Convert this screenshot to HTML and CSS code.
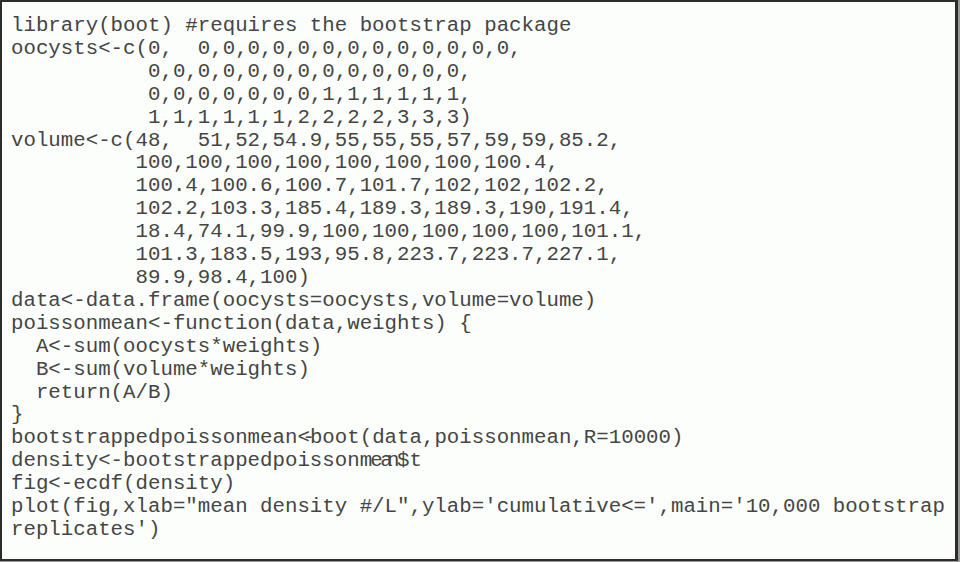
FILE: index.html
```html
<!DOCTYPE html>
<html>
<head>
<meta charset="utf-8">
<link rel="stylesheet" href="styles.css">
</head>
<body>
<div class="box"><pre class="code">library(boot) #requires the bootstrap package
oocysts&lt;-c(0,  0,0,0,0,0,0,0,0,0,0,0,0,0,
           0,0,0,0,0,0,0,0,0,0,0,0,0,
           0,0,0,0,0,0,0,1,1,1,1,1,1,
           1,1,1,1,1,1,2,2,2,2,3,3,3)
volume&lt;-c(48,  51,52,54.9,55,55,55,57,59,59,85.2,
          100,100,100,100,100,100,100,100.4,
          100.4,100.6,100.7,101.7,102,102,102.2,
          102.2,103.3,185.4,189.3,189.3,190,191.4,
          18.4,74.1,99.9,100,100,100,100,100,101.1,
          101.3,183.5,193,95.8,223.7,223.7,227.1,
          89.9,98.4,100)
data&lt;-data.frame(oocysts=oocysts,volume=volume)
poissonmean&lt;-function(data,weights) {
  A&lt;-sum(oocysts*weights)
  B&lt;-sum(volume*weights)
  return(A/B)
}
bootstrappedpoissonmean<span class="ls-60">&lt;</span><span class="ls-40">-</span>boot(data,poissonmean,R=10000)
density&lt;-bootstrappedpoisson<span class="ls-15">m</span><span class="ls-20">e</span><span class="ls-45">a</span><span class="ls-20">n</span>$t
fig&lt;-ecdf(density)
plot(fig,xlab="mean density #/L",ylab='cumulative&lt;=',main='10,000 bootstrap
replicates')</pre></div>
</body>
</html>
```
FILE: styles.css
```css
html, body {
  margin: 0;
  padding: 0;
  background: #9a9a9a;
}
body {
  width: 960px;
  height: 562px;
  overflow: hidden;
}
.box {
  box-sizing: border-box;
  width: 958px;
  height: 561px;
  background: #fcfefc;
  border: 2px solid #2c2c2c;
  border-right-width: 3px;
  padding: 13px 0 0 9px;
}
.code {
  margin: 0;
  font-family: "Liberation Mono", "Courier New", monospace;
  font-size: 20.75px;
  line-height: 22.9px;
  color: #454545;
  white-space: pre;
}
.ls-60 { letter-spacing: -0.6ch; }
.ls-45 { letter-spacing: -0.45ch; }
.ls-40 { letter-spacing: -0.4ch; }
.ls-20 { letter-spacing: -0.2ch; }
.ls-15 { letter-spacing: -0.15ch; }
```
